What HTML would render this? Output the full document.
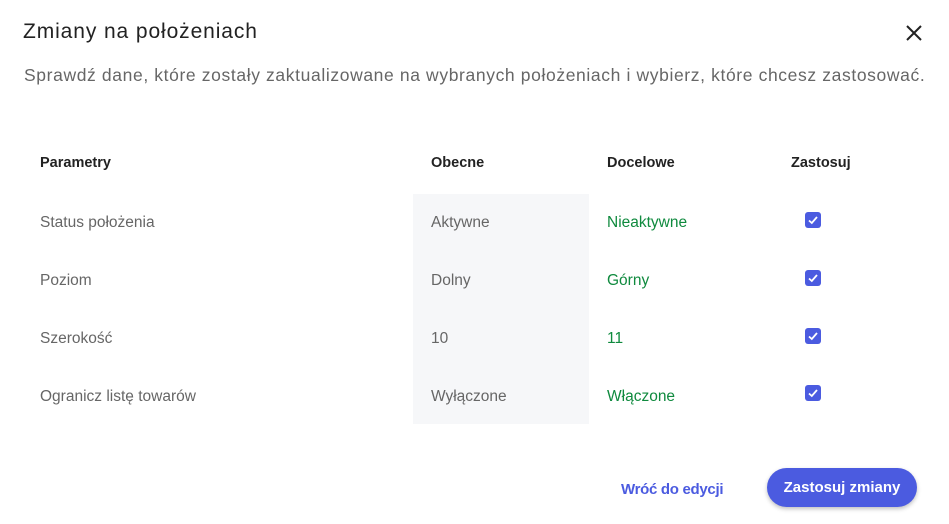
<!DOCTYPE html>
<html><head><meta charset="utf-8"><style>
*{margin:0;padding:0;box-sizing:border-box}
body{width:949px;height:524px;background:#fff;font-family:"Liberation Sans",sans-serif;position:relative;overflow:hidden}
.a{position:absolute;white-space:nowrap}
h1{position:absolute;left:23px;top:20px;font-size:21px;font-weight:normal;color:#222;letter-spacing:0.9px}
.sub{left:24px;top:65px;font-size:17.5px;color:#666;letter-spacing:0.62px}
.th{font-size:14.5px;font-weight:bold;color:#222;top:155px}
.td{font-size:15.5px;color:#666}
.g{color:#0f8a3e}
.col{position:absolute;left:413px;top:194px;width:176px;height:230px;background:#f6f7f9}
.cb{position:absolute;left:805px;width:16px;height:16px;background:#4b5be0;border-radius:3px}
.cb svg{position:absolute;left:2px;top:2px}
.btn{position:absolute;left:767px;top:468px;width:150px;height:39px;border-radius:20px;background:#4b5be0;color:#fff;font-weight:bold;font-size:15px;text-align:center;line-height:39px;box-shadow:0 2px 4px rgba(0,0,0,.25)}
.lnk{left:621px;top:481px;color:#4b5be0;font-weight:bold;font-size:15px;letter-spacing:-0.3px}
</style></head><body>
<h1>Zmiany na położeniach</h1>
<svg class="a" style="left:905px;top:24px" width="18" height="18" viewBox="0 0 18 18"><path d="M2 2L16 16M16 2L2 16" stroke="#222" stroke-width="2"/></svg>
<div class="a sub">Sprawdź dane, które zostały zaktualizowane na wybranych położeniach i wybierz, które chcesz zastosować.</div>
<div class="col"></div>
<div class="a th" style="left:40px">Parametry</div>
<div class="a th" style="left:431px">Obecne</div>
<div class="a th" style="left:607px">Docelowe</div>
<div class="a th" style="left:791px">Zastosuj</div>

<div class="a td" style="left:40px;top:214px">Status położenia</div>
<div class="a td" style="left:431px;top:214px">Aktywne</div>
<div class="a td g" style="left:607px;top:214px">Nieaktywne</div>
<div class="a td" style="left:40px;top:272px">Poziom</div>
<div class="a td" style="left:431px;top:272px">Dolny</div>
<div class="a td g" style="left:607px;top:272px">Górny</div>
<div class="a td" style="left:40px;top:330px">Szerokość</div>
<div class="a td" style="left:431px;top:330px">10</div>
<div class="a td g" style="left:607px;top:330px">11</div>
<div class="a td" style="left:40px;top:388px">Ogranicz listę towarów</div>
<div class="a td" style="left:431px;top:388px">Wyłączone</div>
<div class="a td g" style="left:607px;top:388px">Włączone</div>

<div class="cb" style="top:212px"><svg width="12" height="12" viewBox="0 0 12 12"><path d="M2 6.5L4.8 9L10 3" fill="none" stroke="#fff" stroke-width="1.8"/></svg></div>
<div class="cb" style="top:270px"><svg width="12" height="12" viewBox="0 0 12 12"><path d="M2 6.5L4.8 9L10 3" fill="none" stroke="#fff" stroke-width="1.8"/></svg></div>
<div class="cb" style="top:328px"><svg width="12" height="12" viewBox="0 0 12 12"><path d="M2 6.5L4.8 9L10 3" fill="none" stroke="#fff" stroke-width="1.8"/></svg></div>
<div class="cb" style="top:385px"><svg width="12" height="12" viewBox="0 0 12 12"><path d="M2 6.5L4.8 9L10 3" fill="none" stroke="#fff" stroke-width="1.8"/></svg></div>

<div class="a lnk">Wróć do edycji</div>
<div class="btn">Zastosuj zmiany</div>
</body></html>
